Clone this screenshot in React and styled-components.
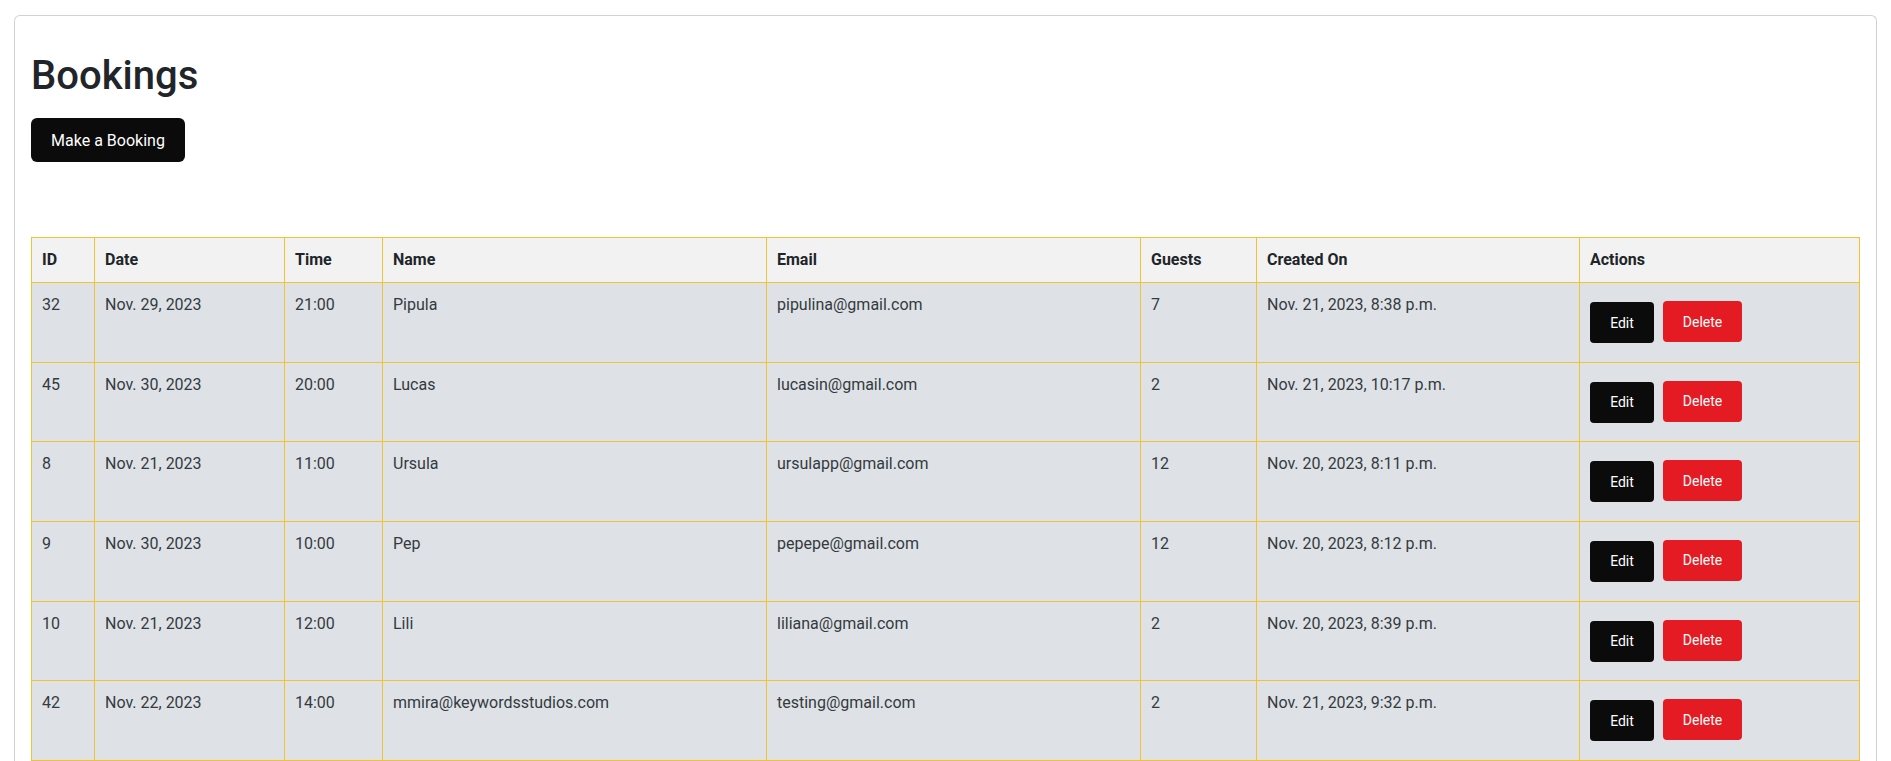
import React from "react";
import styled, { createGlobalStyle } from "styled-components";

const GlobalStyle = createGlobalStyle`
  html, body { margin: 0; padding: 0; background: #ffffff; }
  body {
    font-family: Roboto, "Liberation Sans", Arial, sans-serif;
    color: #212529;
    font-size: 16px;
  }
  * { box-sizing: border-box; }
`;

const Page = styled.div`
  padding: 15px 14px 0 14px;
`;

const Card = styled.section`
  border: 1px solid #d2d2d2;
  border-bottom: none;
  border-radius: 6px 6px 0 0;
  padding: 20px 16px 0 16px;
  min-height: 746px;
`;

const Title = styled.h1`
  font-size: 40px;
  font-weight: 500;
  line-height: 48px;
  margin: 16px 0 18px 0;
  color: #212529;
`;

const PrimaryButton = styled.button`
  display: inline-flex;
  align-items: center;
  justify-content: center;
  width: 154px;
  height: 44px;
  border: none;
  border-radius: 6px;
  background: #0b0b0b;
  color: #ffffff;
  font-family: inherit;
  font-size: 16px;
  cursor: pointer;
`;

const TableWrap = styled.div`
  margin-top: 75px;
`;

const Table = styled.table`
  width: 1828px;
  border-collapse: collapse;
  table-layout: fixed;
`;

const HeadCell = styled.th`
  width: ${(p) => p.$w}px;
  text-align: left;
  font-weight: 700;
  background: #f2f2f2;
  border: 1px solid #f2c230;
  padding: 12px 10px;
  line-height: 20px;
  font-size: 16px;
  color: #212529;
`;

const Row = styled.tr`
  background: #dee2e6;
`;

const Cell = styled.td`
  vertical-align: top;
  border: 1px solid #f2c230;
  padding: 12px 10px;
  line-height: 20px;
  font-size: 16px;
  color: #343a40;
  height: 79.67px;
`;

const Actions = styled.div`
  display: flex;
  align-items: flex-start;
  gap: 9px;
  padding-top: 6px;
`;

const SmallButton = styled.button`
  display: inline-flex;
  align-items: center;
  justify-content: center;
  width: ${(p) => p.$w}px;
  height: 41px;
  margin-top: ${(p) => p.$mt || 0}px;
  border: none;
  border-radius: 4px;
  background: ${(p) => p.$bg};
  color: #ffffff;
  font-family: inherit;
  font-size: 14px;
  cursor: pointer;
`;

const columns = [
  { label: "ID", w: 63 },
  { label: "Date", w: 190 },
  { label: "Time", w: 98 },
  { label: "Name", w: 384 },
  { label: "Email", w: 374 },
  { label: "Guests", w: 116 },
  { label: "Created On", w: 323 },
  { label: "Actions", w: 280 },
];

const bookings = [
  ["32", "Nov. 29, 2023", "21:00", "Pipula", "pipulina@gmail.com", "7", "Nov. 21, 2023, 8:38 p.m."],
  ["45", "Nov. 30, 2023", "20:00", "Lucas", "lucasin@gmail.com", "2", "Nov. 21, 2023, 10:17 p.m."],
  ["8", "Nov. 21, 2023", "11:00", "Ursula", "ursulapp@gmail.com", "12", "Nov. 20, 2023, 8:11 p.m."],
  ["9", "Nov. 30, 2023", "10:00", "Pep", "pepepe@gmail.com", "12", "Nov. 20, 2023, 8:12 p.m."],
  ["10", "Nov. 21, 2023", "12:00", "Lili", "liliana@gmail.com", "2", "Nov. 20, 2023, 8:39 p.m."],
  ["42", "Nov. 22, 2023", "14:00", "mmira@keywordsstudios.com", "testing@gmail.com", "2", "Nov. 21, 2023, 9:32 p.m."],
];

export default function App() {
  return (
    <>
      <GlobalStyle />
      <Page>
        <Card>
          <Title>Bookings</Title>
          <PrimaryButton>Make a Booking</PrimaryButton>
          <TableWrap>
            <Table>
              <thead>
                <tr>
                  {columns.map((c) => (
                    <HeadCell key={c.label} $w={c.w}>
                      {c.label}
                    </HeadCell>
                  ))}
                </tr>
              </thead>
              <tbody>
                {bookings.map((b) => (
                  <Row key={b[0]}>
                    {b.map((v, i) => (
                      <Cell key={i}>{v}</Cell>
                    ))}
                    <Cell>
                      <Actions>
                        <SmallButton $w={64} $bg="#0b0b0b" $mt={1}>
                          Edit
                        </SmallButton>
                        <SmallButton $w={79} $bg="#e41b23">
                          Delete
                        </SmallButton>
                      </Actions>
                    </Cell>
                  </Row>
                ))}
              </tbody>
            </Table>
          </TableWrap>
        </Card>
      </Page>
    </>
  );
}
